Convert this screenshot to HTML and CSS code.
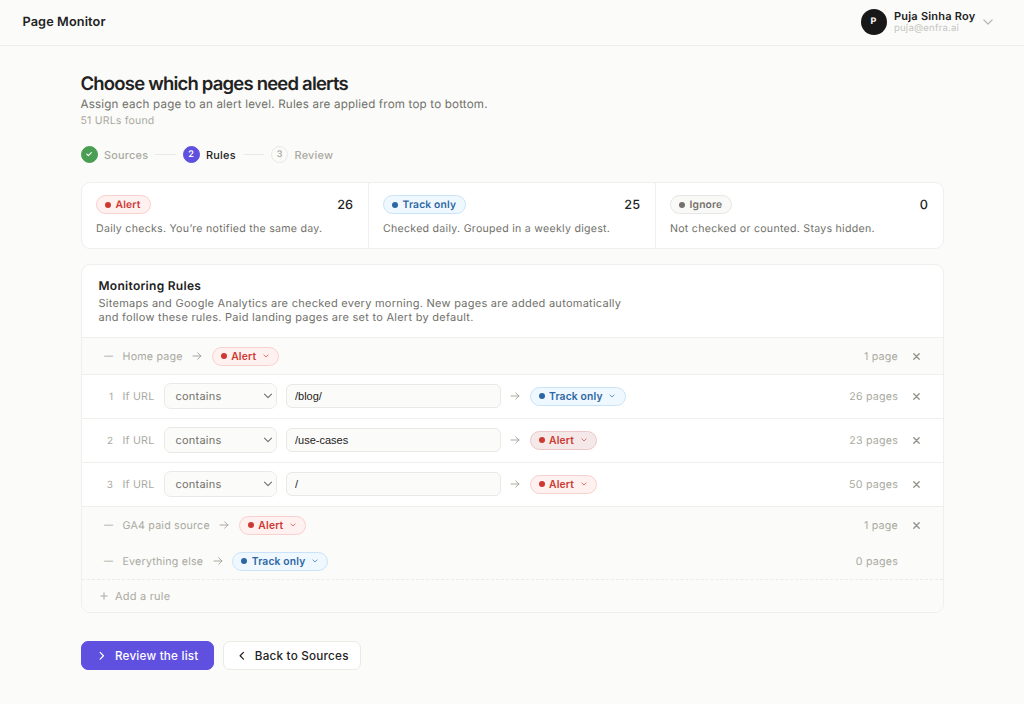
FILE: index.html
```html
<!DOCTYPE html>
<html lang="en">
<head>
<meta charset="utf-8">
<title>Page Monitor</title>
<link rel="stylesheet" href="styles.css">
</head>
<body>
<svg class="defs" width="0" height="0" aria-hidden="true">
  <symbol id="arrow" viewBox="0 0 10 10"><path d="M1 5h8M5.7 1.9 9 5 5.7 8.1"/></symbol>
  <symbol id="chev" viewBox="0 0 10 10"><path d="M1.5 3.2 5 6.7l3.5-3.5"/></symbol>
  <symbol id="x" viewBox="0 0 10 10"><path d="M2 2l6 6M8 2 2 8"/></symbol>
</svg>
<header class="topbar">
  <div class="brand">Page Monitor</div>
  <div class="user">
    <div class="avatar">P</div>
    <div class="who"><div class="name">Puja Sinha Roy</div><div class="mail">puja@enfra.ai</div></div>
    <svg class="user-chev"><use href="#chev"/></svg>
  </div>
</header>
<main class="main">
  <h1 class="title">Choose which pages need alerts</h1>
  <p class="sub">Assign each page to an alert level. Rules are applied from top to bottom.</p>
  <p class="found">51 URLs found</p>
  <nav class="steps">
    <span class="num done"><svg class="check" viewBox="0 0 10 10"><path d="M2.2 5.2 4.2 7.1 7.9 3.2"/></svg></span><span class="step s1">Sources</span><i class="line"></i>
    <span class="num current">2</span><span class="step s2 active">Rules</span><i class="line"></i>
    <span class="num">3</span><span class="step s3">Review</span>
  </nav>
  <section class="card stats">
    <div class="stat"><div class="stat-top"><span class="pill alert">Alert</span><span class="count">26</span></div><p class="desc">Daily checks. You’re notified the same day.</p></div>
    <div class="stat"><div class="stat-top"><span class="pill track">Track only</span><span class="count">25</span></div><p class="desc">Checked daily. Grouped in a weekly digest.</p></div>
    <div class="stat"><div class="stat-top"><span class="pill ignore">Ignore</span><span class="count">0</span></div><p class="desc">Not checked or counted. Stays hidden.</p></div>
  </section>
  <section class="card rules">
    <div class="rules-head">
      <h2 class="rules-title">Monitoring Rules</h2>
      <p class="rules-text">Sitemaps and Google Analytics are checked every morning. New pages are added automatically<br>and follow these rules. Paid landing pages are set to Alert by default.</p>
    </div>
    <div class="row fixed home">
      <span class="idx dash">—</span><span class="label">Home page</span><svg class="arrow"><use href="#arrow"/></svg>
      <button class="pill alert menu">Alert<svg class="caret"><use href="#chev"/></svg></button>
      <span class="pages">1 page</span><svg class="close"><use href="#x"/></svg>
    </div>
    <div class="row rule">
      <span class="idx">1</span><span class="label if">If URL</span>
      <div class="select">contains<svg class="sel-chev"><use href="#chev"/></svg></div><input class="input" value="/blog/">
      <svg class="arrow"><use href="#arrow"/></svg>
      <button class="pill track menu">Track only<svg class="caret"><use href="#chev"/></svg></button>
      <span class="pages">26 pages</span><svg class="close"><use href="#x"/></svg>
    </div>
    <div class="row rule">
      <span class="idx">2</span><span class="label if">If URL</span>
      <div class="select">contains<svg class="sel-chev"><use href="#chev"/></svg></div><input class="input" value="/use-cases">
      <svg class="arrow"><use href="#arrow"/></svg>
      <button class="pill alert menu pressed">Alert<svg class="caret"><use href="#chev"/></svg></button>
      <span class="pages">23 pages</span><svg class="close"><use href="#x"/></svg>
    </div>
    <div class="row rule">
      <span class="idx">3</span><span class="label if">If URL</span>
      <div class="select">contains<svg class="sel-chev"><use href="#chev"/></svg></div><input class="input" value="/">
      <svg class="arrow"><use href="#arrow"/></svg>
      <button class="pill alert menu">Alert<svg class="caret"><use href="#chev"/></svg></button>
      <span class="pages">50 pages</span><svg class="close"><use href="#x"/></svg>
    </div>
    <div class="row fixed">
      <span class="idx dash">—</span><span class="label">GA4 paid source</span><svg class="arrow"><use href="#arrow"/></svg>
      <button class="pill alert menu">Alert<svg class="caret"><use href="#chev"/></svg></button>
      <span class="pages">1 page</span><svg class="close"><use href="#x"/></svg>
    </div>
    <div class="row fixed">
      <span class="idx dash">—</span><span class="label">Everything else</span><svg class="arrow"><use href="#arrow"/></svg>
      <button class="pill track menu">Track only<svg class="caret"><use href="#chev"/></svg></button>
      <span class="pages">0 pages</span><span class="close"></span>
    </div>
    <div class="add"><svg class="plus" viewBox="0 0 8 8"><path d="M4 .8v6.4M.8 4h6.4"/></svg>Add a rule</div>
  </section>
  <div class="actions">
    <button class="btn primary"><svg viewBox="0 0 10 10"><path d="M3.3 1.5 6.8 5 3.3 8.5"/></svg>Review the list</button>
    <button class="btn"><svg viewBox="0 0 10 10"><path d="M6.8 1.5 3.3 5l3.5 3.5"/></svg>Back to Sources</button>
  </div>
</main>
</body>
</html>
```
FILE: styles.css
```css
* { box-sizing: border-box; }
body { margin: 0; height: 704px; background: #fbfbf9; color: #222; font: 11px/14px Inter, sans-serif; letter-spacing: 0.22px; overflow: hidden; text-rendering: geometricPrecision; }
h1, h2, p { margin: 0; }
button { font: inherit; letter-spacing: inherit; margin: 0; }
svg { fill: none; stroke: currentColor; stroke-width: 1; stroke-linecap: round; stroke-linejoin: round; flex: none; }
.defs { position: absolute; }
.topbar { height: 46px; padding: 0 30px 2px 22.5px; display: flex; align-items: center; justify-content: space-between; border-bottom: 1px solid #eeeeec; }
.brand { font-size: 12.7px; font-weight: 600; letter-spacing: 0.12px; padding-top: 3px; }
.user { display: flex; align-items: center; }
.avatar { width: 26px; height: 26px; border-radius: 50%; background: #181818; color: #fff; font-size: 9px; font-weight: 700; display: flex; align-items: center; justify-content: center; margin-right: 7.5px; padding-top: 1px; }
.who { width: 81px; padding-top: 1px; }
.name { font-size: 11px; font-weight: 600; line-height: 13px; white-space: nowrap; }
.mail { font-size: 9.5px; line-height: 12px; color: #c5c5c0; }
.user-chev { width: 12px; height: 12px; margin-left: 7px; color: #b5b5b0; }
.main { width: 863px; margin: 0 auto; padding-top: 26px; }
.title { font-size: 18.5px; line-height: 24px; font-weight: 600; letter-spacing: -0.8px; }
.sub { font-size: 11.6px; line-height: 16px; color: #71716b; letter-spacing: 0.18px; }
.found { font-size: 10.5px; line-height: 16px; margin-top: 1px; color: #aaaaa1; letter-spacing: 0.2px; }
.steps { display: flex; align-items: center; margin-top: 16px; height: 18px; }
.num { width: 17px; height: 17px; border-radius: 50%; border: 1px solid #e8e8e5; display: flex; align-items: center; justify-content: center; font-size: 9px; font-weight: 600; letter-spacing: 0; color: #aaaaa1; padding-top: 1px; }
.done { background: #4a9e54; border-color: #4a9e54; color: #fff; padding-top: 0; }
.current { background: #5f50df; border-color: #5f50df; color: #fff; }
.check { width: 8px; height: 8px; stroke-width: 1.4; }
.step { margin-left: 6.5px; padding-top: 1px; font-weight: 500; font-size: 10.9px; color: #aaaaa1; white-space: nowrap; }
.active { color: #222; }
.s1 { width: 44px; }
.s2 { width: 30.5px; }
.line { width: 20.5px; height: 1px; background: #e9e9e6; margin: 0 7px; }
.card { border: 1px solid #efefec; border-radius: 9px; background: #fff; overflow: hidden; }
.stats { display: grid; grid-template-columns: repeat(3, 1fr); height: 67px; margin-top: 19px; }
.stat { padding: 11.5px 14.5px 0; border-right: 1px solid #efefec; }
.stat:last-child { border-right: 0; }
.stat-top { display: flex; align-items: center; justify-content: space-between; height: 20px; }
.count { font-size: 12.7px; font-weight: 500; letter-spacing: 0; padding-top: 2px; }
.desc { margin-top: 7.5px; color: #71716b; white-space: nowrap; font-size: 10.6px; letter-spacing: 0.27px; }
.pill { display: inline-flex; align-items: center; height: 19px; padding: 0 9px 0 8px; border: 1px solid; border-radius: 10px; font-weight: 600; font-size: 10.3px; white-space: nowrap; letter-spacing: 0.17px; }
.pill::before { content: ""; width: 6px; height: 6px; border-radius: 50%; background: currentColor; margin-right: 4.5px; }
.alert { color: #cd3932; background: #fef1f0; border-color: #f8d0ce; }
.track { color: #2c67a3; background: #f0f8ff; border-color: #c9e4f9; }
.ignore { color: #77716b; background: #f9f9f7; border-color: #e6e6e3; }
.pressed { background: #f4e8e8; border-color: #edc8c9; }
.caret { width: 6px; height: 6px; margin: 0 .5px 0 6.5px; opacity: .8; stroke-width: 1.4; }
.rules { margin-top: 15px; }
.rules-head { height: 72px; padding: 13px 17px 0; }
.rules-title { font-size: 12px; line-height: 16px; font-weight: 600; letter-spacing: 0.28px; }
.rules-text { margin-top: 2px; color: #71716b; white-space: nowrap; letter-spacing: 0.26px; }
.row { display: flex; align-items: center; height: 44px; padding: 0 21.5px 1px 22px; border-top: 1px solid #efefec; font-size: 10.7px; letter-spacing: 0.2px; }
.fixed { height: 36px; background: #fbfbf9; border: 0; padding-bottom: 0; }
.home { height: 37px; border-top: 1px solid #efefec; }
.rule + .fixed { height: 37px; border-top: 1px solid #efefec; }
.idx { width: 9.5px; margin-right: 9.5px; padding-top: 1px; color: #aaaaa1; letter-spacing: 0; display: flex; justify-content: flex-end; font-size: 10px; }
.dash { font-size: 9px; }
.label { color: #aaaaa1; white-space: nowrap; padding-top: 1px; }
.rule .label, .rule .idx, .rule .pages { padding-top: 2px; }
.if { width: 41.5px; }
.arrow { width: 10px; height: 10px; margin: 0 9.5px; color: #aaaaa1; }
.rule .arrow { margin-left: 9px; }
.select { width: 113px; height: 26px; border: 1px solid #e9e9e6; border-radius: 7px; background: #fbfbf9; color: #71716b; display: flex; align-items: center; justify-content: space-between; padding: 0 3px 0 10.5px; font-size: 11px; letter-spacing: 0.22px; }
.sel-chev { width: 10px; height: 10px; stroke-width: 1.1; }
.input { width: 215px; height: 24px; margin-left: 9px; border: 1px solid #e9e9e6; border-radius: 6px; background: #fbfbf9; color: #222; font: 11px "Liberation Sans", Arial, sans-serif; letter-spacing: 0; padding: 0 8px; }
.pages { margin-left: auto; color: #aaaaa1; padding-top: 1px; }
.close { width: 9px; height: 9px; margin-left: 14px; color: #92928b; stroke-width: 1.5; }
.add { height: 33px; border-top: 1px dashed #ebebe8; background: #fbfbf9; color: #aaaaa1; display: flex; align-items: center; padding-left: 18px; }
.plus { width: 8px; height: 8px; margin-right: 7.5px; }
.actions { display: flex; gap: 9.5px; margin-top: 28px; }
.btn { height: 29px; border: 1px solid #eaeae7; border-radius: 7px; background: #fff; color: #222; font-size: 11.7px; font-weight: 500; display: flex; align-items: center; justify-content: center; gap: 8px; width: 138px; padding: 1px 0 0 2px; white-space: nowrap; }
.primary { width: 133px; background: #5f50df; border-color: #5f50df; color: #fff; }
.btn svg { width: 9.5px; height: 9.5px; stroke-width: 1.3; }
```
